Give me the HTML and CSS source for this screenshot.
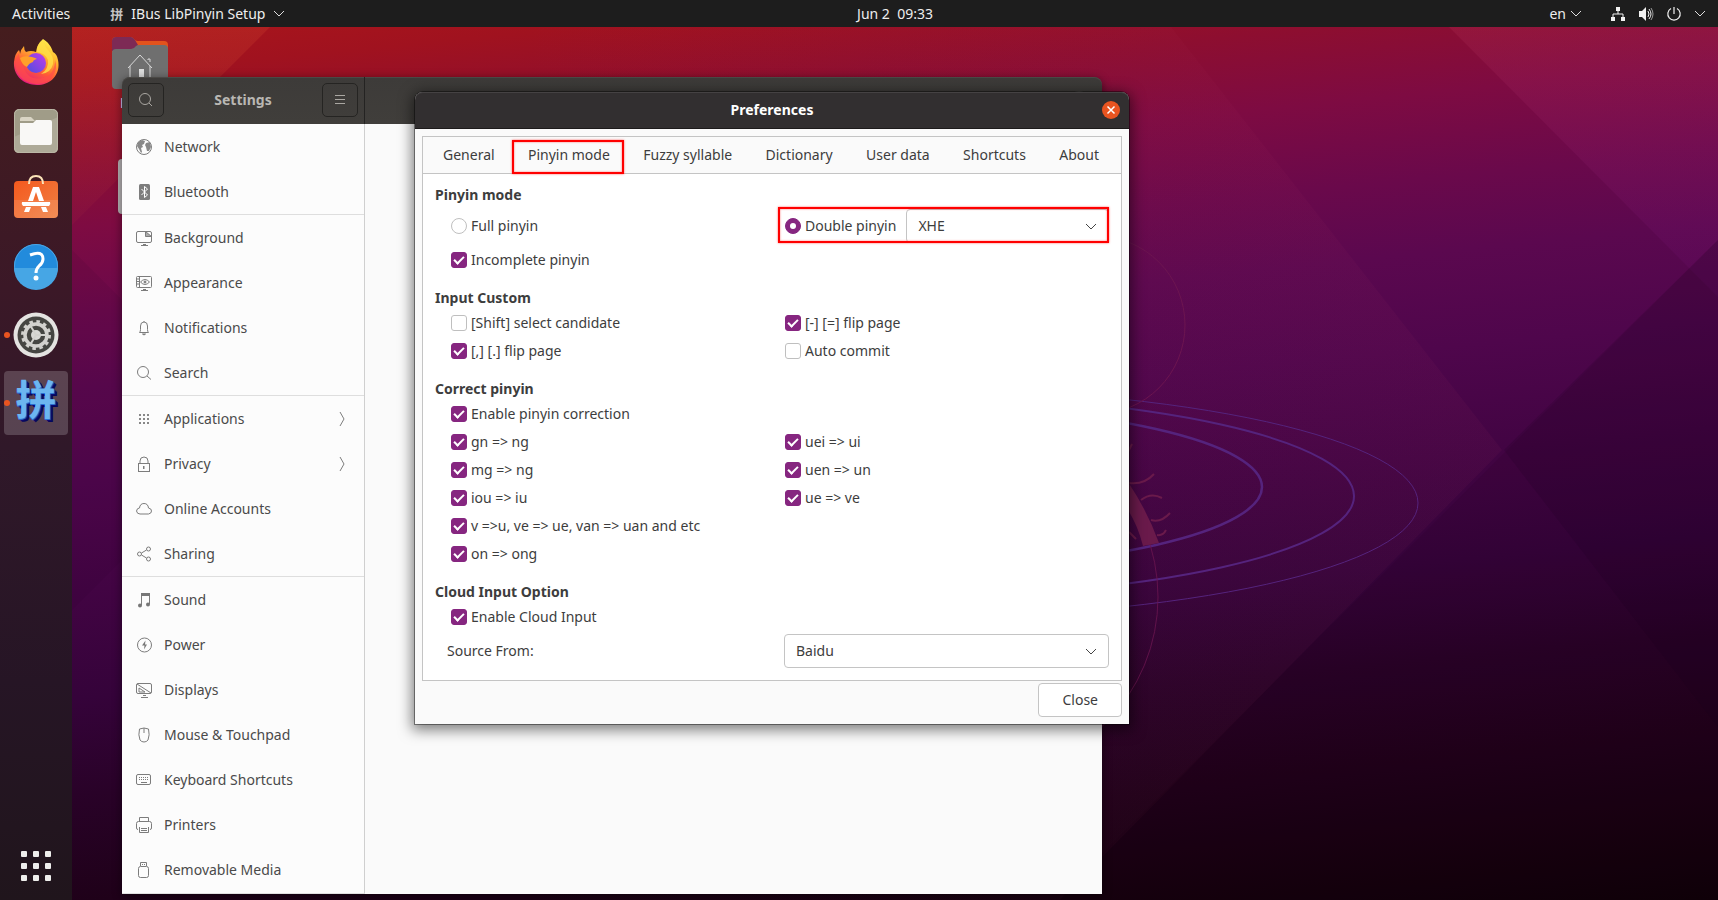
FILE: index.html
```html
<!DOCTYPE html>
<html lang="en">
<head>
<meta charset="utf-8">
<title>Preferences</title>
<link rel="stylesheet" href="styles.css">
</head>
<body class="screen">
<header class="topbar">
  <div class="topbar-left">
    <button class="bar-btn">Activities</button>
    <button class="bar-btn app-menu"><span class="app-glyph">拼</span>IBus LibPinyin Setup<svg class="chev" viewBox="0 0 12 8"><path d="M1 1l5 5 5-5"/></svg></button>
  </div>
  <button class="bar-btn clock">Jun 2&nbsp; 09:33</button>
  <div class="topbar-right">
    <button class="bar-btn lang">en<svg class="chev" viewBox="0 0 12 8"><path d="M1 1l5 5 5-5"/></svg></button>
    <button class="bar-btn status" aria-label="System">
      <svg class="tray" viewBox="0 0 16 16"><path d="M6 1h4v4H6zM1 11h4v4H1zM11 11h4v4h-4z" fill="#f2f2f2"/><path d="M8 5v3M3 11V8h10v3" fill="none" stroke="#f2f2f2"/></svg>
      <svg class="tray" viewBox="0 0 16 16"><path d="M1 5h3l4-4v14l-4-4H1z" fill="#f2f2f2"/><path d="M10 5q2 3 0 6M11 3q4 5 0 10" fill="none" stroke="#f2f2f2"/><path d="M13 2q4 6 0 12" fill="none" stroke="#999"/></svg>
      <svg class="tray" viewBox="0 0 16 16"><path d="M8 1v7M5 2.500a6.200 6.200 0 1 0 6 0" fill="none" stroke="#f2f2f2" stroke-width="1.200"/></svg>
      <svg class="chev" viewBox="0 0 12 8"><path d="M1 1l5 5 5-5"/></svg>
    </button>
  </div>
</header>
<div class="desktop">
  <svg class="wallpaper" viewBox="0 27 1718 873" preserveAspectRatio="none" aria-hidden="true">
    <defs>
      <linearGradient id="sky" gradientUnits="userSpaceOnUse" x1="0" y1="0" x2="106" y2="1059">
        <stop offset=".03" stop-color="#a9151b"/><stop offset=".08" stop-color="#a0121f"/><stop offset=".15" stop-color="#8d0e30"/><stop offset=".22" stop-color="#7e0b42"/><stop offset=".3" stop-color="#6a094b"/><stop offset=".37" stop-color="#5b084f"/><stop offset=".46" stop-color="#4f064c"/><stop offset=".56" stop-color="#420443"/><stop offset=".66" stop-color="#35033a"/><stop offset=".75" stop-color="#290228"/><stop offset=".85" stop-color="#1f0119"/><stop offset="1" stop-color="#0f0008"/>
      </linearGradient>
      <linearGradient id="shine" x1="0" y1="0" x2="0" y2="1"><stop offset="0" stop-color="#ff7840" stop-opacity=".13"/><stop offset="1" stop-color="#ff7840" stop-opacity="0"/></linearGradient>
      <linearGradient id="glow" x1="0" y1="0" x2="0" y2="1"><stop offset="0" stop-color="#e05a7a" stop-opacity=".11"/><stop offset="1" stop-color="#a020c0" stop-opacity=".06"/></linearGradient>
      <linearGradient id="haze" x1="0" y1="0" x2="1" y2="0"><stop offset="0" stop-color="#c0406a" stop-opacity="0"/><stop offset="1" stop-color="#c0406a" stop-opacity=".06"/></linearGradient>
    </defs>
    <rect y="27" width="1718" height="873" fill="url(#sky)"/>
    <path d="M0 27H270L72 225L0 297z" fill="url(#shine)"/>
    <path d="M500 27H1171L1502 450L1060 900H500z" fill="url(#haze)"/>
    <path d="M1449 27H1718V297z" fill="url(#glow)"/>
    <path d="M1718 240L1106 850L1060 900H1718z" fill="#1a0010" opacity=".08"/>
    <path d="M1504 450L1718 240V727z" fill="#18001a" opacity=".14"/>
    <path d="M72 610L122 560V300L72 250z" fill="#20002a" opacity=".08"/>
    <g fill="none" stroke="#55237d"><ellipse cx="900" cy="487" rx="362" ry="82" stroke-width="2.500"/><ellipse cx="900" cy="496" rx="454" ry="101" stroke-width="2"/><ellipse cx="900" cy="503" rx="518" ry="115"/></g>
    <g fill="none" stroke="#6c1550"><circle cx="1096" cy="325" r="89"/><circle cx="980" cy="597" r="178" opacity=".8"/></g>
    <path d="M1128 482Q1148 512 1159 543L1143 546Q1138 526 1128 510z" fill="#6a1a4b"/>
    <path d="M1129 483Q1144 485 1154 474M1141 500Q1151 492 1162 498M1151 520Q1161 523 1170 513M1157 535Q1163 536 1166 530M1129 532l7 7M1128 452l4-8" fill="none" stroke="#6a1a4b" stroke-width="2"/>
  </svg>
  <nav class="dock" aria-label="Dock">
    <button class="dock-item" aria-label="Firefox"><svg viewBox="0 0 48 48">
      <defs><linearGradient id="fx" x1=".8" y1="0" x2=".3" y2="1"><stop offset="0" stop-color="#fff44f"/><stop offset=".35" stop-color="#ffb42e"/><stop offset=".65" stop-color="#ff5a36"/><stop offset="1" stop-color="#e31587"/></linearGradient><linearGradient id="fp" x1="1" y1="0" x2="0" y2="1"><stop offset="0" stop-color="#c43be8"/><stop offset="1" stop-color="#4a4fe0"/></linearGradient></defs>
      <path d="M31 0C36 3 39 7 41 13Q45 15 46 21C49 35 39 46 25 46C11 46 1 36 2 23Q3 14 7 11Q8 13 8 15Q9 10 12 7Q12 11 14 13Q19 11 24 13Q25 5 31 0z" fill="url(#fx)"/>
      <path d="M12 29Q16 42 31 39Q43 35 43 21Q46 29 41 37Q34 46 23 45Q8 43 4 30Q2 21 7 14Q7 22 12 29z" fill="#ff4d4a" opacity=".65"/>
      <circle cx="24" cy="24" r="10" fill="url(#fp)"/>
      <path d="M8 19Q12 16 20 18Q24 19 25 20Q21 21 21 23Q17 24 15 28Q10 26 8 19z" fill="#ffa02a"/>
      <path d="M25 13Q33 14 36 21Q37 30 29 35Q39 34 41 25Q42 17 36 11Q33 8 31 1Q24 6 25 13z" fill="#ffe047" opacity=".8"/></svg></button>
    <button class="dock-item" aria-label="Files"><svg viewBox="0 0 48 48"><rect x="2" y="2" width="44" height="44" rx="5" fill="#a09c88"/><path d="M2 30L46 10V41Q46 46 41 46H7Q2 46 2 41z" fill="#aeaa98"/><rect x="2.500" y="2.500" width="43" height="43" rx="5" fill="none" stroke="#bbb7a6"/><path d="M8 12q0-2 2-2h9l4 4H8z" fill="#dad5c5"/><path d="M8 16H21L24 13H38Q40 13 40 15V36Q40 38 38 38H10Q8 38 8 36z" fill="#f9f8f6"/></svg></button>
    <button class="dock-item" aria-label="Software"><svg viewBox="0 0 48 48"><defs><linearGradient id="sw" x1="0" y1="0" x2="1" y2="1"><stop offset="0" stop-color="#f4591e"/><stop offset="1" stop-color="#f08043"/></linearGradient></defs><rect x="2" y="6" width="44" height="37" rx="4" fill="url(#sw)"/><path d="M2 25H46V39Q46 43 42 43H6Q2 43 2 39z" fill="#fff" opacity=".1"/><path d="M17 9Q17 1 24 1T31 9" fill="none" stroke="#fbe3b8" stroke-width="2"/><path d="M21 12h6l5 14h-5l-3-9-3 9h-5zM10 27h28q1 2-1 4H11q-2-2-1-4zM14 32h5l-2 5h-5zM29 32h5l2 5h-5z" fill="#fff"/></svg></button>
    <button class="dock-item" aria-label="Help"><svg viewBox="0 0 48 48"><circle cx="24" cy="23" r="22" fill="#228bdc"/><path d="M2 25a22 22 0 0 0 44 0z" fill="#46a6e5"/><circle cx="24" cy="23" r="21.500" fill="none" stroke="#4ba5e4"/><path d="M18 12Q31 7 31 16Q31 20 27 23Q24 26 24 30" fill="none" stroke="#fff" stroke-width="3"/><circle cx="24" cy="35" r="2.500" fill="#fff"/></svg></button>
    <button class="dock-item running" aria-label="Settings"><svg viewBox="0 0 48 48"><circle cx="24" cy="24" r="22.500" fill="#e4e3e1"/><circle cx="24" cy="24" r="18.500" fill="#454542"/><circle cx="24" cy="24" r="13.500" fill="none" stroke="#d2d1ce" stroke-width="3" stroke-dasharray="3.500 3.569"/><circle cx="24" cy="24" r="11" fill="none" stroke="#d2d1ce" stroke-width="3.500"/><circle cx="24" cy="24" r="5" fill="#d8d7d5"/><path d="M24 24h12M24 24l-6-10M24 24l-6 10" stroke="#d2d1ce" stroke-width="2"/></svg></button>
    <button class="dock-item running active" aria-label="IBus LibPinyin"><span class="pin">拼</span></button>
    <button class="dock-item apps" aria-label="Show Applications"><svg viewBox="0 0 48 48" fill="#eeeeec"><g id="r"><rect x="9" y="9" width="6" height="6" rx="1"/><rect x="21" y="9" width="6" height="6" rx="1"/><rect x="33" y="9" width="6" height="6" rx="1"/></g><use href="#r" y="12"/><use href="#r" y="24"/></svg></button>
  </nav>
  <main class="workspace">
    <div class="desk-icons">
      <div class="desk-icon"><svg viewBox="0 0 56 52"><path d="M0 4Q0 0 4 0H19Q21 0 23 3L25 4H52Q56 4 56 8V20H0z" fill="#e2531d"/><path d="M0 4Q0 0 4 0H19Q21 0 23 3L26 8L20 14H0z" fill="#7d2a55"/><path d="M0 16Q0 12 4 12H19Q22 12 24 9Q25 8 28 8H52Q56 8 56 12V48Q56 52 52 52H4Q0 52 0 48z" fill="#6f6f6f"/><path d="M16 31L28 18L40 31M18 29v16M38 29v16M36 23v-1h2v3" fill="none" stroke="#d8d8d8"/><path d="M27 32h5v14h-5z" fill="#ddd"/></svg><span>Home</span></div>
      <div class="drive"></div>
    </div>
    <section class="window settings" aria-label="Settings">
      <div class="settings-head">
        <div class="side-head">
          <button class="head-btn" aria-label="Search"><svg class="ico" viewBox="0 0 16 16"><circle cx="7" cy="7" r="5.500"/><path d="M11 11l3 3"/></svg></button>
          <h1 class="settings-title">Settings</h1>
          <button class="head-btn" aria-label="Menu"><svg class="ico" viewBox="0 0 16 16"><path d="M3 3.500h10M3 7.500h10M3 11.500h10"/></svg></button>
        </div>
        <button class="back-close" aria-label="Close settings"></button>
      </div>
      <div class="settings-body">
        <nav class="side">
          <a class="row" href="#"><svg class="ico" viewBox="0 0 16 16"><circle cx="8" cy="8" r="7.500"/><path d="M2 3l4-2 3 1-1 3-2 1 1 2-2 1 1 4-1 1-2-4-2-3zM10 4l4-1 1 5-2 4-2 0-1-4-1-2z" fill="#888" stroke="none"/></svg>Network</a>
          <a class="row" href="#"><svg class="ico" viewBox="0 0 16 16"><rect x="3" y="0" width="11" height="16" rx="1.500" fill="#7d7d7d" stroke="none"/><path d="M5.500 5l6 6-3 2.500v-11l3 2.500-6 6" stroke="#fff"/></svg>Bluetooth</a>
          <a class="row sep" href="#"><svg class="ico" viewBox="0 0 16 16"><rect x=".5" y="1.500" width="15" height="11" rx="1.500"/><path d="M5 15.500h7M7 14.500h3"/><path d="M9.500 1.500v5h6z" fill="#aaa"/></svg>Background</a>
          <a class="row" href="#"><svg class="ico" viewBox="0 0 16 16"><rect x=".5" y="1.500" width="15" height="11" rx="1"/><path d="M5 15.500h7M7 14.500h3M3.500 2v10M1 4h2M1 6.500h2M1 9h2M4.500 7q4.500-5 9 0-4.500 5-9 0"/><circle cx="9" cy="7" r="1" fill="#777"/></svg>Appearance</a>
          <a class="row" href="#"><svg class="ico" viewBox="0 0 16 16"><path d="M3.500 12.500q1-1 1-3V6q0-4 3.500-4t3.500 4v3.500q0 2 1 3zM8 2V1"/><path d="M6.500 14h3l-1.500 1z" fill="#777"/></svg>Notifications</a>
          <a class="row" href="#"><svg class="ico" viewBox="0 0 16 16"><circle cx="7" cy="7" r="5.500"/><path d="M11 11l4 3.500"/></svg>Search</a>
          <a class="row sep" href="#"><svg class="ico" viewBox="0 0 16 16"><path d="M3 3h2v2H3zM7 3h2v2H7zM11 3h2v2h-2zM3 7h2v2H3zM7 7h2v2H7zM11 7h2v2h-2zM3 11h2v2H3zM7 11h2v2H7zM11 11h2v2h-2z" fill="#888" stroke="none"/></svg>Applications<svg class="ico more" viewBox="0 0 16 16"><path d="M6 1l4 7-4 7"/></svg></a>
          <a class="row" href="#"><svg class="ico" viewBox="0 0 16 16"><rect x="2.500" y="7.500" width="11" height="8"/><path d="M4 7V5q0-4 4-4t4 4v2M8 10v3M7.500 10v3"/></svg>Privacy<svg class="ico more" viewBox="0 0 16 16"><path d="M6 1l4 7-4 7"/></svg></a>
          <a class="row" href="#"><svg class="ico" viewBox="0 0 16 16"><path d="M4 13Q1 13 .5 10 1 7 3.500 7 4 2.500 8 2.500t4.500 4.500Q15.500 7.500 15.500 10T12.500 13z"/></svg>Online Accounts</a>
          <a class="row" href="#"><svg class="ico" viewBox="0 0 16 16"><circle cx="3.500" cy="8" r="2"/><circle cx="12.500" cy="3" r="2"/><circle cx="12.500" cy="13" r="2"/><path d="M5.500 7l5-3M5.500 9l5 3"/></svg>Sharing</a>
          <a class="row sep" href="#"><svg class="ico" viewBox="0 0 16 16"><path d="M5.500 13V1.500h8V12M5.500 2.500h8"/><path d="M5 1h9v3H5z" fill="#777" stroke="none"/><circle cx="4" cy="13.500" r="2" fill="#777" stroke="none"/><circle cx="12" cy="12.500" r="2" fill="#777" stroke="none"/></svg>Sound</a>
          <a class="row" href="#"><svg class="ico" viewBox="0 0 16 16"><circle cx="8.500" cy="8" r="7"/><path d="M9.500 3.500L6 8.500h2.500L8 12.500l3-5H9z" fill="#777" stroke="none"/></svg>Power</a>
          <a class="row" href="#"><svg class="ico" viewBox="0 0 16 16"><rect x=".5" y="1.500" width="15" height="10" rx="1.500"/><path d="M5 15.500h7M7 13.500h3M1 2l14 9M3 6v4h6z"/></svg>Displays</a>
          <a class="row" href="#"><svg class="ico" viewBox="0 0 16 16"><path d="M3.500 2q4.500-2 9 0 1.500 6-.5 11-1.500 2-4 2t-4-2Q2 8 3.500 2zM8 1v5"/></svg>Mouse &amp; Touchpad</a>
          <a class="row" href="#"><svg class="ico" viewBox="0 0 16 16"><rect x=".5" y="2.500" width="14" height="10" rx="1.500"/><path d="M3 5.500h10M3 7.500h10" stroke-dasharray="1 1"/><path d="M5 10.500h6"/></svg>Keyboard Shortcuts</a>
          <a class="row" href="#"><svg class="ico" viewBox="0 0 16 16"><path d="M3.500 4V.5h9V4M2 12.500Q.5 12.500.5 11V6.500q0-2 2-2h11q2 0 2 2V11q0 1.500-1.500 1.500M3.500 10v5.500h9V10M5 11.500h6M5 13.500h6"/></svg>Printers</a>
          <a class="row" href="#"><svg class="ico" viewBox="0 0 16 16"><rect x="2.500" y="4.500" width="10" height="11" rx="2"/><path d="M4.500 4V.5h6V4M6 2.500h1M8 2.500h1"/></svg>Removable Media</a>
        </nav>
        <div class="settings-pane"></div>
      </div>
    </section>
    <section class="window dialog" role="dialog" aria-label="Preferences">
      <header class="dialog-head"><h2 class="dialog-title">Preferences</h2><button class="win-close" aria-label="Close window"><svg viewBox="0 0 10 10"><path d="M1.500 1.500l7 7M8.500 1.500l-7 7"/></svg></button></header>
      <div class="notebook">
        <div class="tabs" role="tablist">
          <button class="tab" role="tab">General</button>
          <button class="tab marked" role="tab" aria-selected="true">Pinyin mode</button>
          <button class="tab" role="tab">Fuzzy syllable</button>
          <button class="tab" role="tab">Dictionary</button>
          <button class="tab" role="tab">User data</button>
          <button class="tab" role="tab">Shortcuts</button>
          <button class="tab" role="tab">About</button>
        </div>
        <div class="panel">
          <section class="group">
            <h3 class="group-title">Pinyin mode</h3>
            <div class="options">
              <label class="opt tall"><input class="tick radio" type="radio" name="mode">Full pinyin</label>
              <div class="double">
                <label class="opt"><input class="tick radio" type="radio" name="mode" checked>Double pinyin</label>
                <div class="combo"><select class="combo-box" aria-label="Double pinyin scheme"><option>XHE</option></select><svg class="combo-arrow" viewBox="0 0 12 8"><path d="M1 1l5 5 5-5"/></svg></div>
              </div>
              <label class="opt"><input class="tick" type="checkbox" checked>Incomplete pinyin</label>
            </div>
          </section>
          <section class="group">
            <h3 class="group-title">Input Custom</h3>
            <div class="options">
              <label class="opt"><input class="tick" type="checkbox">[Shift] select candidate</label>
              <label class="opt"><input class="tick" type="checkbox" checked>[-] [=] flip page</label>
              <label class="opt"><input class="tick" type="checkbox" checked>[,] [.] flip page</label>
              <label class="opt"><input class="tick" type="checkbox">Auto commit</label>
            </div>
          </section>
          <section class="group">
            <h3 class="group-title">Correct pinyin</h3>
            <div class="options">
              <label class="opt wide"><input class="tick" type="checkbox" checked>Enable pinyin correction</label>
              <label class="opt"><input class="tick" type="checkbox" checked>gn =&gt; ng</label>
              <label class="opt"><input class="tick" type="checkbox" checked>uei =&gt; ui</label>
              <label class="opt"><input class="tick" type="checkbox" checked>mg =&gt; ng</label>
              <label class="opt"><input class="tick" type="checkbox" checked>uen =&gt; un</label>
              <label class="opt"><input class="tick" type="checkbox" checked>iou =&gt; iu</label>
              <label class="opt"><input class="tick" type="checkbox" checked>ue =&gt; ve</label>
              <label class="opt wide"><input class="tick" type="checkbox" checked>v =&gt;u, ve =&gt; ue, van =&gt; uan and etc</label>
              <label class="opt wide"><input class="tick" type="checkbox" checked>on =&gt; ong</label>
            </div>
          </section>
          <section class="group">
            <h3 class="group-title">Cloud Input Option</h3>
            <div class="options">
              <label class="opt wide"><input class="tick" type="checkbox" checked>Enable Cloud Input</label>
            </div>
            <div class="source">
              <label for="source">Source From:</label>
              <div class="combo"><select class="combo-box" id="source"><option>Baidu</option></select><svg class="combo-arrow" viewBox="0 0 12 8"><path d="M1 1l5 5 5-5"/></svg></div>
            </div>
          </section>
        </div>
      </div>
      <footer class="dialog-foot"><button class="close-btn">Close</button></footer>
    </section>
  </main>
</div>
</body>
</html>
```
FILE: styles.css
```css
*, *::before, *::after { box-sizing: border-box; }
.screen {
  margin: 0;
  min-height: 100vh;
  display: flex;
  flex-direction: column;
  overflow: hidden;
  background: #0f0008;
  color: #3d3d3d;
  font: 14px/20px "Noto Sans", "Noto Sans CJK SC", sans-serif;
}
button, select, input { font: inherit; color: inherit; margin: 0; }
button { border: 0; padding: 0; background: none; }
h1, h2, h3 { margin: 0; font-size: 14px; font-weight: 700; }

/* top bar: the clock is centred on the area beside the dock */
.topbar {
  display: grid;
  grid-template-columns: 72px 1fr auto 1fr;
  align-items: center;
  height: 27px;
  background: #1d1d1d;
  color: #eee;
}
.topbar-left, .topbar-right, .bar-btn { display: flex; align-items: center; }
.topbar-left { grid-column: 1 / 3; gap: 40px; padding-left: 12px; }
.topbar-right { justify-content: flex-end; gap: 28px; padding-right: 12px; }
.app-menu { gap: 8px; }
.app-glyph { font: 700 13px/20px "Noto Sans CJK SC", sans-serif; color: #c4c4c4; }
.chev { width: 12px; height: 8px; fill: none; stroke: #ddd; }
.lang { gap: 4px; }
.status { gap: 12px; }
.tray { width: 16px; height: 16px; }

/* desktop */
.desktop { position: relative; flex: 1; display: flex; }
.wallpaper { position: absolute; inset: 0; width: 100%; height: 100%; }
.workspace { position: relative; flex: 1; }
.dock {
  position: relative;
  display: flex;
  flex-direction: column;
  align-items: center;
  gap: 4px;
  width: 72px;
  padding: 4px 4px 2px;
  background: linear-gradient(#451d1e, #3b1827 30%, #301829 48%, #261525 75%, #20151c);
}
.dock-item {
  position: relative;
  display: grid;
  place-items: center;
  width: 64px;
  height: 64px;
  border-radius: 4px;
}
.dock-item svg { width: 48px; height: 48px; }
.dock-item.active { padding-bottom: 12px; background: rgba(255, 255, 255, .19); }
.dock-item.running::before {
  content: "";
  position: absolute;
  left: 0;
  top: 29px;
  width: 6px;
  height: 6px;
  border-radius: 3px;
  background: #e95420;
}
.pin {
  font: 700 41px/52px "Noto Sans CJK SC", sans-serif;
  color: #6cb6f0;
  text-shadow: 0 1px #2a6fd0, 1px 1px #1d4fb0, 2px 2px #0a0a70, 3px 3px #06065c;
}
.apps { margin-top: auto; }

.desk-icons { position: absolute; left: 40px; top: 10px; color: #fff; }
.desk-icon { display: flex; flex-direction: column; align-items: center; gap: 4px; width: 56px; }
.desk-icon svg { width: 56px; height: 52px; }
.drive { width: 50px; height: 55px; margin: 46px 6px; border-radius: 4px; background: #b5b1b3; }

/* windows */
.window { position: absolute; border-radius: 8px 8px 0 0; }
.settings {
  left: 50px;
  right: 616px;
  top: 50px;
  box-shadow: 0 2px 8px 1px rgba(0, 0, 0, .4);
}
.settings-head {
  display: flex;
  align-items: center;
  justify-content: space-between;
  height: 47px;
  border-radius: 8px 8px 0 0;
  background: linear-gradient(#3d3b39, #403e3b);
  box-shadow: inset 0 1px #4b4946;
  color: #b9b7b3;
}
.side-head {
  display: flex;
  align-items: center;
  justify-content: space-between;
  width: 243px;
  height: 47px;
  padding: 6px 6px 7px;
  border-right: 1px solid #242322;
}
.head-btn {
  display: grid;
  place-items: center;
  width: 36px;
  height: 34px;
  border: 1px solid #252422;
  border-radius: 5px;
}
.head-btn .ico { stroke: #aaa7a2; }
.back-close { width: 20px; height: 20px; margin-right: 13px; border-radius: 10px; background: #5a5856; }
.settings-body { display: flex; }
.side {
  width: 243px;
  padding-bottom: 1px;
  border-right: 1px solid #cfcfcf;
  border-bottom: 1px solid #e0e0e0;
  background: #fcfcfc;
}
.settings-pane { flex: 1; background: #fafafa; }
.row {
  display: flex;
  align-items: center;
  gap: 12px;
  height: 45px;
  padding: 0 14px;
  color: #4a4a4a;
  text-decoration: none;
}
.row.sep { height: 46px; border-top: 1px solid #dedede; }
.ico { flex: none; width: 16px; height: 16px; fill: none; stroke: #7c7c7c; }
.more { margin-left: auto; }

.dialog {
  left: 343px;
  right: 589px;
  top: 65px;
  padding-bottom: 7px;
  background: #fafafa;
  box-shadow: 0 0 0 1px rgba(0, 0, 0, .4), 0 3px 14px 3px rgba(0, 0, 0, .5);
}
.dialog-head {
  display: grid;
  grid-template-columns: 1fr auto 1fr;
  align-items: center;
  height: 37px;
  padding: 0 9px;
  border-bottom: 1px solid #1d1b1b;
  border-radius: 8px 8px 0 0;
  background: #322f30;
  box-shadow: inset 0 1px #454243;
  color: #fff;
}
.dialog-title { grid-column: 2; }
.win-close {
  justify-self: end;
  display: grid;
  place-items: center;
  width: 18px;
  height: 18px;
  border-radius: 9px;
  background: #e95420;
}
.win-close svg { width: 10px; height: 10px; stroke: #fff; stroke-width: 1.5px; }
.notebook { margin: 7px 7px 2px; border: 1px solid #c4c4c4; background: #fff; }
.tabs {
  display: flex;
  justify-content: space-between;
  height: 37px;
  padding: 0 4px;
  border-bottom: 1px solid #c4c4c4;
  background: #fafafa;
}
.tab { position: relative; padding: 0 16px; white-space: nowrap; }
.tab:last-child { padding-right: 18px; }
.marked::after {
  content: "";
  position: absolute;
  inset: 3px 2px -1px 0;
  border: 2px solid #f00;
  box-shadow: 0 0 2px rgba(255, 0, 0, .6), inset 0 0 2px rgba(255, 0, 0, .6);
}
.panel { display: grid; gap: 13px; padding: 10px 12px 12px; }
.group-title { line-height: 22px; }
.options { display: grid; grid-template-columns: 1fr 1fr; column-gap: 10px; padding-left: 16px; }
.opt { display: flex; align-items: center; gap: 4px; height: 28px; white-space: nowrap; }
.opt.wide { grid-column: 1 / -1; }
.opt.tall { height: 40px; }
.tick {
  appearance: none;
  display: grid;
  place-items: center;
  width: 16px;
  height: 16px;
  border: 1px solid #bfbfbf;
  border-radius: 3px;
  background: #fff;
}
.tick:checked { border-color: #862680; background: #862680; }
.tick:not(.radio):checked::after {
  content: "";
  width: 10px;
  height: 6px;
  margin-top: -3px;
  border: solid #fff;
  border-width: 0 0 2px 2px;
  transform: rotate(-45deg);
}
.radio { border-radius: 8px; }
.radio:checked::after { content: ""; width: 6px; height: 6px; border-radius: 3px; background: #fff; }
.double { position: relative; display: flex; align-items: center; gap: 10px; }
.double .opt { flex: none; }
.double::after {
  content: "";
  position: absolute;
  inset: 1px 0 3px -7px;
  border: 2px solid #f00;
  box-shadow: 0 0 2px rgba(255, 0, 0, .6), inset 0 0 2px rgba(255, 0, 0, .6);
  pointer-events: none;
}
.combo { position: relative; flex: 1; }
.combo-box {
  appearance: none;
  display: block;
  width: 100%;
  height: 34px;
  padding: 0 11px;
  border: 1px solid #c4c4c4;
  border-radius: 4px;
  background: #fff;
}
.combo-arrow { position: absolute; right: 12px; top: 14px; width: 12px; height: 8px; fill: none; stroke: #444; pointer-events: none; }
.source { display: grid; grid-template-columns: 1fr 1fr; column-gap: 12px; align-items: center; margin-top: 3px; padding-left: 12px; }
.dialog-foot { display: flex; justify-content: flex-end; padding: 0 7px; }
.close-btn { height: 34px; padding: 0 23px; border: 1px solid #c4c4c4; border-radius: 4px; background: #fff; }
```
